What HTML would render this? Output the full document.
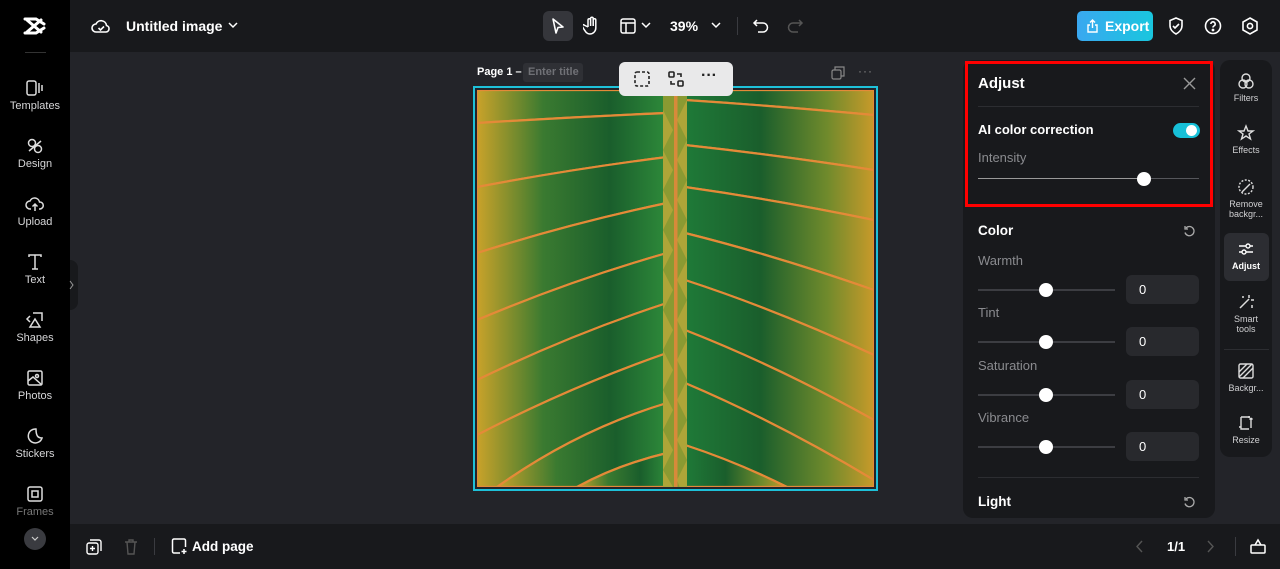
<!DOCTYPE html>
<html><head><meta charset="utf-8"><style>
*{margin:0;padding:0;box-sizing:border-box}
body{width:1280px;height:569px;overflow:hidden;background:#232429;font-family:"Liberation Sans",sans-serif;color:#fff;position:relative}
.abs{position:absolute}
.side{left:0;top:0;width:70px;height:569px;background:#000}
.top{left:70px;top:0;width:1210px;height:52px;background:#18191c}
.bot{left:70px;top:524px;width:1210px;height:45px;background:#18191c}
.nav{position:absolute;left:0;width:70px;text-align:center;font-size:11px;color:#d6d6d8}
.nav svg{display:block;margin:0 auto 3px}
.panel{left:963px;top:60px;width:252px;height:458px;background:#18191c;border-radius:10px}
.strip{left:1220px;top:60px;width:52px;height:397px;background:#18191c;border-radius:10px}
.st{position:absolute;left:0;width:52px;text-align:center;font-size:9px;color:#d0d0d2;line-height:10px}
.st svg{display:block;margin:0 auto 3px}
.lbl{position:absolute;left:978px;font-size:13px;color:#8a8b8f}
.h{position:absolute;left:978px;font-size:13.5px;font-weight:bold;color:#fff}
.track{position:absolute;left:978px;width:137px;height:2px;background:#3c3d42}
.knob{position:absolute;width:14px;height:14px;border-radius:50%;background:#fff}
.box{position:absolute;left:1126px;width:73px;height:29px;background:#28292d;border-radius:6px;font-size:13px;padding:7px 0 0 13px}
</style></head><body>
<div class="abs side"></div>
<div class="abs top"></div>
<div class="abs bot"></div>

<svg class="abs" style="left:22px;top:15px" width="26" height="22" viewBox="0 0 26 22"><path d="M3 4h11l8 5M3 18h11l8-5M5 5l14 12M5 17L19 5" stroke="#fff" stroke-width="3" fill="none" stroke-linecap="round"/></svg>
<div class="abs" style="left:25px;top:52px;width:21px;height:1px;background:#333"></div>

<div class="nav" style="top:79px"><svg width="20" height="18" viewBox="0 0 20 18" fill="none" stroke="#ddd" stroke-width="1.5"><rect x="2" y="2" width="9" height="14" rx="2"/><path d="M14 4v10M17 6v6"/></svg>Templates</div>
<div class="nav" style="top:137px"><svg width="20" height="18" viewBox="0 0 20 18" fill="none" stroke="#ddd" stroke-width="1.5"><circle cx="7" cy="6" r="3.5"/><circle cx="13" cy="12" r="3.5"/><path d="M4 14l12-10"/></svg>Design</div>
<div class="nav" style="top:195px"><svg width="20" height="18" viewBox="0 0 20 18" fill="none" stroke="#ddd" stroke-width="1.5"><path d="M6 14H5a4 4 0 010-8 5 5 0 019.5 1A3.5 3.5 0 0115 14h-1M10 16V9M7.5 11.5L10 9l2.5 2.5"/></svg>Upload</div>
<div class="nav" style="top:253px"><svg width="20" height="18" viewBox="0 0 20 18" fill="none" stroke="#ddd" stroke-width="1.5"><path d="M4 4V2h12v2M10 2v14M7 16h6"/></svg>Text</div>
<div class="nav" style="top:311px"><svg width="20" height="18" viewBox="0 0 20 18" fill="none" stroke="#ddd" stroke-width="1.5"><path d="M8 2h9v8M5 5L2 8l3 3M10 8l5 8H5z"/></svg>Shapes</div>
<div class="nav" style="top:369px"><svg width="20" height="18" viewBox="0 0 20 18" fill="none" stroke="#ddd" stroke-width="1.5"><rect x="3" y="2" width="14" height="14" rx="1.5"/><circle cx="12" cy="7" r="1.5"/><path d="M3 12l5-4 9 8"/></svg>Photos</div>
<div class="nav" style="top:427px"><svg width="20" height="18" viewBox="0 0 20 18" fill="none" stroke="#ddd" stroke-width="1.5"><path d="M11 2a7 7 0 106 9c-4 0-6-2-6-9z"/></svg>Stickers</div>
<div class="nav" style="top:485px;color:#777"><svg width="20" height="18" viewBox="0 0 20 18" fill="none" stroke="#ddd" stroke-width="1.5"><rect x="3" y="2" width="14" height="14" rx="2"/><rect x="7" y="6" width="6" height="6"/></svg>Frames</div>
<div class="abs" style="left:24px;top:528px;width:22px;height:22px;border-radius:50%;background:#3a3b40"></div>
<svg class="abs" style="left:31px;top:536px" width="8" height="6"><path d="M1 1l3 3 3-3" stroke="#ccc" fill="none" stroke-width="1.2"/></svg>
<div class="abs" style="left:70px;top:260px;width:8px;height:50px;background:#18191c;border-radius:0 8px 8px 0"></div>
<svg class="abs" style="left:69px;top:280px" width="6" height="10"><path d="M1 1l3 4-3 4" stroke="#999" fill="none"/></svg>

<svg class="abs" style="left:91px;top:17px" width="20" height="18" viewBox="0 0 20 18" fill="none" stroke="#fff" stroke-width="1.6"><path d="M5 15a4 4 0 010-8 5.5 5.5 0 0110.5 1.5A3.3 3.3 0 0115 15z"/><path d="M7.5 11l2 2 3.5-3.5"/></svg>
<div class="abs" style="left:126px;top:18px;font-size:14px;font-weight:bold">Untitled image</div>
<svg class="abs" style="left:228px;top:22px" width="10" height="7"><path d="M1 1l4 4 4-4" stroke="#fff" fill="none" stroke-width="1.5"/></svg>

<div class="abs" style="left:543px;top:11px;width:30px;height:30px;border-radius:6px;background:#35363b"></div>
<svg class="abs" style="left:550px;top:17px" width="16" height="18" viewBox="0 0 16 18"><path d="M3 2l10 8-5 .5L6 16z" fill="none" stroke="#fff" stroke-width="1.6" stroke-linejoin="round"/></svg>
<svg class="abs" style="left:583px;top:16px" width="18" height="20" viewBox="0 0 18 20" fill="none" stroke="#fff" stroke-width="1.5"><path d="M5 11V4a1.3 1.3 0 012.6 0v6V2.5a1.3 1.3 0 012.6 0V10V4a1.3 1.3 0 012.6 0v8a6 6 0 01-6 6c-3 0-4-2-6-5l-1.5-2.5a1.2 1.2 0 012-1.3L5 11"/></svg>
<svg class="abs" style="left:620px;top:18px" width="16" height="16" viewBox="0 0 16 16" fill="none" stroke="#fff" stroke-width="1.5"><rect x="1" y="1" width="14" height="14" rx="2"/><path d="M1 5h14M6 5v10"/></svg>
<svg class="abs" style="left:641px;top:22px" width="10" height="7"><path d="M1 1l4 4 4-4" stroke="#fff" fill="none" stroke-width="1.5"/></svg>
<div class="abs" style="left:670px;top:18px;font-size:14px;font-weight:bold">39%</div>
<svg class="abs" style="left:711px;top:22px" width="10" height="7"><path d="M1 1l4 4 4-4" stroke="#fff" fill="none" stroke-width="1.5"/></svg>
<div class="abs" style="left:737px;top:17px;width:1px;height:18px;background:#3a3b40"></div>
<svg class="abs" style="left:752px;top:17px" width="18" height="18" viewBox="0 0 18 18" fill="none" stroke="#fff" stroke-width="1.5"><path d="M5 3L2 6l3 3M2 6h9a4.5 4.5 0 010 9H6"/></svg>
<svg class="abs" style="left:786px;top:17px" width="18" height="18" viewBox="0 0 18 18" fill="none" stroke="#555" stroke-width="1.5"><path d="M13 3l3 3-3 3M16 6H7a4.5 4.5 0 000 9h5"/></svg>

<div class="abs" style="left:1077px;top:11px;width:76px;height:30px;border-radius:5px;background:linear-gradient(90deg,#3aa8f0,#19c6de)"></div>
<svg class="abs" style="left:1086px;top:19px" width="13" height="14" viewBox="0 0 13 14" fill="none" stroke="#fff" stroke-width="1.4"><path d="M4 6H2v7h9V6H9M6.5 9V1M4 3.5L6.5 1 9 3.5"/></svg>
<div class="abs" style="left:1105px;top:18px;font-size:14px;font-weight:bold">Export</div>
<svg class="abs" style="left:1167px;top:16px" width="18" height="20" viewBox="0 0 18 20" fill="none" stroke="#fff" stroke-width="1.6"><path d="M9 2l6 2.5v5c0 4-3 7-6 8.5-3-1.5-6-4.5-6-8.5v-5z"/><path d="M6 10l2 2 4-4"/></svg>
<svg class="abs" style="left:1204px;top:17px" width="18" height="18" viewBox="0 0 18 18" fill="none" stroke="#fff" stroke-width="1.6"><circle cx="9" cy="9" r="7.5"/><path d="M6.8 7a2.2 2.2 0 114 1.3c-.8.7-1.8 1-1.8 2.2"/><circle cx="9" cy="13" r=".6" fill="#fff"/></svg>
<svg class="abs" style="left:1241px;top:16px" width="18" height="20" viewBox="0 0 18 20" fill="none" stroke="#fff" stroke-width="1.6"><path d="M9 2l7 4v8l-7 4-7-4V6z"/><circle cx="9" cy="10" r="2.6"/></svg>

<div class="abs" style="left:477px;top:66px;font-size:11px;font-weight:bold">Page 1 –</div>
<div class="abs" style="left:523px;top:63px;width:60px;height:19px;background:#2f3035;border-radius:3px;font-size:11px;color:#707176;padding:3px 0 0 5px;font-weight:bold">Enter title</div>
<svg class="abs" style="left:831px;top:66px" width="14" height="14" viewBox="0 0 14 14" fill="none" stroke="#888" stroke-width="1.2"><rect x="1" y="4" width="9" height="9" rx="1.5"/><path d="M4 4V1h9v9h-3"/></svg>
<div class="abs" style="left:858px;top:64px;font-size:12px;color:#888;letter-spacing:1px">···</div>

<div class="abs" style="left:473px;top:86px;width:405px;height:405px;border:2px solid #1ec1d9"></div>
<svg class="abs" style="left:477px;top:90px" width="397" height="397" viewBox="0 0 397 397">
<defs>
<linearGradient id="lg" x1="0" y1="0" x2="1" y2="0"><stop offset="0" stop-color="#c9a22a"/><stop offset=".35" stop-color="#3a7a30"/><stop offset=".7" stop-color="#1a5e2c"/><stop offset="1" stop-color="#2e8a3a"/></linearGradient>
<linearGradient id="rg" x1="0" y1="0" x2="1" y2="0"><stop offset="0" stop-color="#1f7a38"/><stop offset=".4" stop-color="#1a5e2c"/><stop offset=".75" stop-color="#6f8a2c"/><stop offset="1" stop-color="#c89a2a"/></linearGradient>
</defs>
<rect width="397" height="397" fill="#c79b2a"/>
<g stroke="#e48a38" stroke-width="2.2">
<path d="M190 0 L0 0 L0 33 Q95 27 190 23Z" fill="url(#lg)"/>
<path d="M190 23 Q95 27 0 33 L0 97 Q95 79 190 67Z" fill="url(#lg)"/>
<path d="M190 67 Q95 79 0 97 L0 163 Q95 133 190 113Z" fill="url(#lg)"/>
<path d="M190 113 Q95 133 0 163 L0 230 Q95 190 190 163Z" fill="url(#lg)"/>
<path d="M190 163 Q95 190 0 230 L0 290 Q95 244 190 213Z" fill="url(#lg)"/>
<path d="M190 213 Q95 244 0 290 L0 345 Q95 296 190 263Z" fill="url(#lg)"/>
<path d="M190 263 Q95 296 0 345 L0 397 L20 397 Q100 340 190 313Z" fill="url(#lg)"/>
<path d="M190 313 Q100 340 20 397 L100 397 Q140 375 190 363Z" fill="url(#lg)"/>
<path d="M190 363 Q140 375 100 397 L190 397Z" fill="url(#lg)"/>
<path d="M208 0 L397 0 L397 25 Q300 16 208 10Z" fill="url(#rg)"/>
<path d="M208 10 Q300 16 397 25 L397 80 Q300 65 208 55Z" fill="url(#rg)"/>
<path d="M208 55 Q300 65 397 80 L397 130 Q300 110 208 97Z" fill="url(#rg)"/>
<path d="M208 97 Q300 110 397 130 L397 200 Q300 166 208 143Z" fill="url(#rg)"/>
<path d="M208 143 Q300 166 397 200 L397 265 Q300 220 208 190Z" fill="url(#rg)"/>
<path d="M208 190 Q300 220 397 265 L397 330 Q300 276 208 240Z" fill="url(#rg)"/>
<path d="M208 240 Q300 276 397 330 L397 390 Q300 332 208 293Z" fill="url(#rg)"/>
<path d="M208 293 Q300 332 397 390 L397 397 L310 397 Q260 372 208 355Z" fill="url(#rg)"/>
<path d="M208 355 Q260 372 310 397 L208 397Z" fill="url(#rg)"/>
</g>
<rect x="186" y="0" width="24" height="397" fill="#8a9a32"/>
<g fill="#b8a83a" opacity=".8"><path d="M186 20l10 20-10 20 10 20-10 20 10 20-10 20 10 20-10 20 10 20-10 20 10 20-10 20 10 20-10 20 10 20-10 20 10 20-10 20 10 17H186z"/><path d="M210 10l-10 20 10 20-10 20 10 20-10 20 10 20-10 20 10 20-10 20 10 20-10 20 10 20-10 20 10 20-10 20 10 20-10 20 10 20-10 20 10 27H210z"/></g>
<rect x="197" y="0" width="3.5" height="397" fill="#d88a3a"/>
</svg>

<div class="abs" style="left:619px;top:62px;width:114px;height:34px;background:#e9e9ea;border-radius:6px"></div>
<svg class="abs" style="left:634px;top:71px" width="16" height="16" viewBox="0 0 16 16" fill="none" stroke="#222" stroke-width="1.6" stroke-dasharray="3 2"><rect x="1" y="1" width="14" height="14" rx="2"/></svg>
<svg class="abs" style="left:668px;top:71px" width="16" height="16" viewBox="0 0 16 16" fill="none" stroke="#222" stroke-width="1.6"><rect x="1" y="1" width="5" height="5" rx="1"/><rect x="10" y="10" width="5" height="5" rx="1"/><path d="M9 3h4v3M7 13H3v-3"/></svg>
<div class="abs" style="left:701px;top:67px;font-size:16px;color:#222;font-weight:bold">···</div>

<div class="abs panel"></div>
<div class="abs" style="left:965px;top:61px;width:248px;height:146px;border:3px solid #f00"></div>
<div class="h" style="top:75px;font-size:15px">Adjust</div>
<svg class="abs" style="left:1183px;top:77px" width="13" height="13"><path d="M1 1l11 11M12 1L1 12" stroke="#999" stroke-width="1.4"/></svg>
<div class="abs" style="left:978px;top:106px;width:221px;height:1px;background:#2c2d31"></div>
<div class="h" style="top:122px;font-size:13px">AI color correction</div>
<div class="abs" style="left:1173px;top:123px;width:27px;height:15px;border-radius:8px;background:#17c0d8"></div>
<div class="abs" style="left:1186px;top:125px;width:11px;height:11px;border-radius:50%;background:#fff"></div>
<div class="lbl" style="top:150px">Intensity</div>
<div class="abs" style="left:978px;top:178px;width:221px;height:1px;background:#55565b"></div>
<div class="abs" style="left:978px;top:178px;width:166px;height:1px;background:#999"></div>
<div class="knob" style="left:1137px;top:172px"></div>

<div class="h" style="top:223px">Color</div>
<svg class="abs" style="left:1183px;top:225px" width="13" height="13" viewBox="0 0 13 13" fill="none" stroke="#aaa" stroke-width="1.3"><path d="M3 3a4.6 4.6 0 11-1 4.5M2 1v3h3"/></svg>

<div class="lbl" style="top:253px">Warmth</div>
<div class="track" style="top:289px"></div><div class="knob" style="left:1039px;top:283px"></div>
<div class="box" style="top:275px">0</div>
<div class="lbl" style="top:305px">Tint</div>
<div class="track" style="top:341px"></div><div class="knob" style="left:1039px;top:335px"></div>
<div class="box" style="top:327px">0</div>
<div class="lbl" style="top:358px">Saturation</div>
<div class="track" style="top:394px"></div><div class="knob" style="left:1039px;top:388px"></div>
<div class="box" style="top:380px">0</div>
<div class="lbl" style="top:410px">Vibrance</div>
<div class="track" style="top:446px"></div><div class="knob" style="left:1039px;top:440px"></div>
<div class="box" style="top:432px">0</div>
<div class="abs" style="left:978px;top:477px;width:221px;height:1px;background:#2c2d31"></div>
<div class="h" style="top:494px">Light</div>
<svg class="abs" style="left:1183px;top:496px" width="13" height="13" viewBox="0 0 13 13" fill="none" stroke="#aaa" stroke-width="1.3"><path d="M3 3a4.6 4.6 0 11-1 4.5M2 1v3h3"/></svg>

<div class="abs strip"></div>
<div class="abs" style="left:1224px;top:233px;width:45px;height:48px;border-radius:6px;background:#2c2d32"></div>
<div class="st abs" style="left:1220px;top:72px"><svg width="18" height="18" viewBox="0 0 18 18" fill="none" stroke="#ddd" stroke-width="1.4"><circle cx="9" cy="6" r="4"/><circle cx="6" cy="12" r="4"/><circle cx="12" cy="12" r="4"/></svg>Filters</div>
<div class="st abs" style="left:1220px;top:124px"><svg width="18" height="18" viewBox="0 0 18 18" fill="none" stroke="#ddd" stroke-width="1.4"><path d="M9 2l2 5h5l-4 3 1.5 5L9 12l-4.5 3L6 10 2 7h5z"/></svg>Effects</div>
<div class="st abs" style="left:1220px;top:178px"><svg width="18" height="18" viewBox="0 0 18 18" fill="none" stroke="#ddd" stroke-width="1.4" stroke-dasharray="2 1.5"><circle cx="9" cy="9" r="7"/><path d="M5 14l8-8" stroke-dasharray="none"/></svg>Remove<br>backgr...</div>
<div class="st abs" style="left:1220px;top:240px;color:#fff;font-weight:bold"><svg width="18" height="18" viewBox="0 0 18 18" fill="none" stroke="#fff" stroke-width="1.4"><path d="M2 6h14M2 12h14"/><circle cx="11" cy="6" r="2" fill="#2c2d32"/><circle cx="7" cy="12" r="2" fill="#2c2d32"/></svg>Adjust</div>
<div class="st abs" style="left:1220px;top:293px"><svg width="18" height="18" viewBox="0 0 18 18" fill="none" stroke="#ddd" stroke-width="1.5"><path d="M3 15l9-9M12 2v3M14 7h3M6 3v2M15 12v3"/></svg>Smart<br>tools</div>
<div class="abs" style="left:1224px;top:349px;width:45px;height:1px;background:#2c2d31"></div>
<div class="st abs" style="left:1220px;top:362px"><svg width="18" height="18" viewBox="0 0 18 18" fill="none" stroke="#ddd" stroke-width="1.4"><rect x="2" y="2" width="14" height="14" rx="1.5"/><path d="M2 10l8-8M6 16L16 6M2 15L15 2"/></svg>Backgr...</div>
<div class="st abs" style="left:1220px;top:414px"><svg width="18" height="18" viewBox="0 0 18 18" fill="none" stroke="#ddd" stroke-width="1.4"><path d="M4 3v12h8M4 3h9M14 5v9M12 2v2M2 13h2M14 4l-1.5 1.5M14 4l1.5 1.5"/></svg>Resize</div>

<svg class="abs" style="left:86px;top:539px" width="16" height="16" viewBox="0 0 16 16" fill="none" stroke="#fff" stroke-width="1.4"><rect x="1" y="4" width="11" height="11" rx="2"/><path d="M4 1h9a2 2 0 012 2v9M6.5 7v5M4 9.5h5"/></svg>
<svg class="abs" style="left:124px;top:539px" width="14" height="16" viewBox="0 0 14 16" fill="none" stroke="#555" stroke-width="1.4"><path d="M1 3h12M5 3V1h4v2M3 3l1 12h6l1-12"/></svg>
<div class="abs" style="left:154px;top:538px;width:1px;height:17px;background:#3a3b40"></div>
<svg class="abs" style="left:171px;top:538px" width="17" height="17" viewBox="0 0 17 17" fill="none" stroke="#fff" stroke-width="1.5"><path d="M9 15H3a1.5 1.5 0 01-1.5-1.5v-11A1.5 1.5 0 013 1h10a1.5 1.5 0 011.5 1.5V9M13 11v5M10.5 13.5h5"/></svg>
<div class="abs" style="left:192px;top:539px;font-size:13.5px;font-weight:bold">Add page</div>
<svg class="abs" style="left:1136px;top:540px" width="8" height="13"><path d="M6 1L1 6.5 6 12" stroke="#555" fill="none" stroke-width="1.4"/></svg>
<div class="abs" style="left:1167px;top:539px;font-size:13px;font-weight:bold">1/1</div>
<svg class="abs" style="left:1206px;top:540px" width="8" height="13"><path d="M2 1l5 5.5L2 12" stroke="#555" fill="none" stroke-width="1.4"/></svg>
<div class="abs" style="left:1235px;top:537px;width:1px;height:19px;background:#3a3b40"></div>
<svg class="abs" style="left:1249px;top:537px" width="18" height="18" viewBox="0 0 18 18" fill="none" stroke="#fff" stroke-width="1.5"><rect x="2" y="8" width="14" height="8" rx="1"/><path d="M6 8l3-5 3 5"/></svg>
</body></html>
